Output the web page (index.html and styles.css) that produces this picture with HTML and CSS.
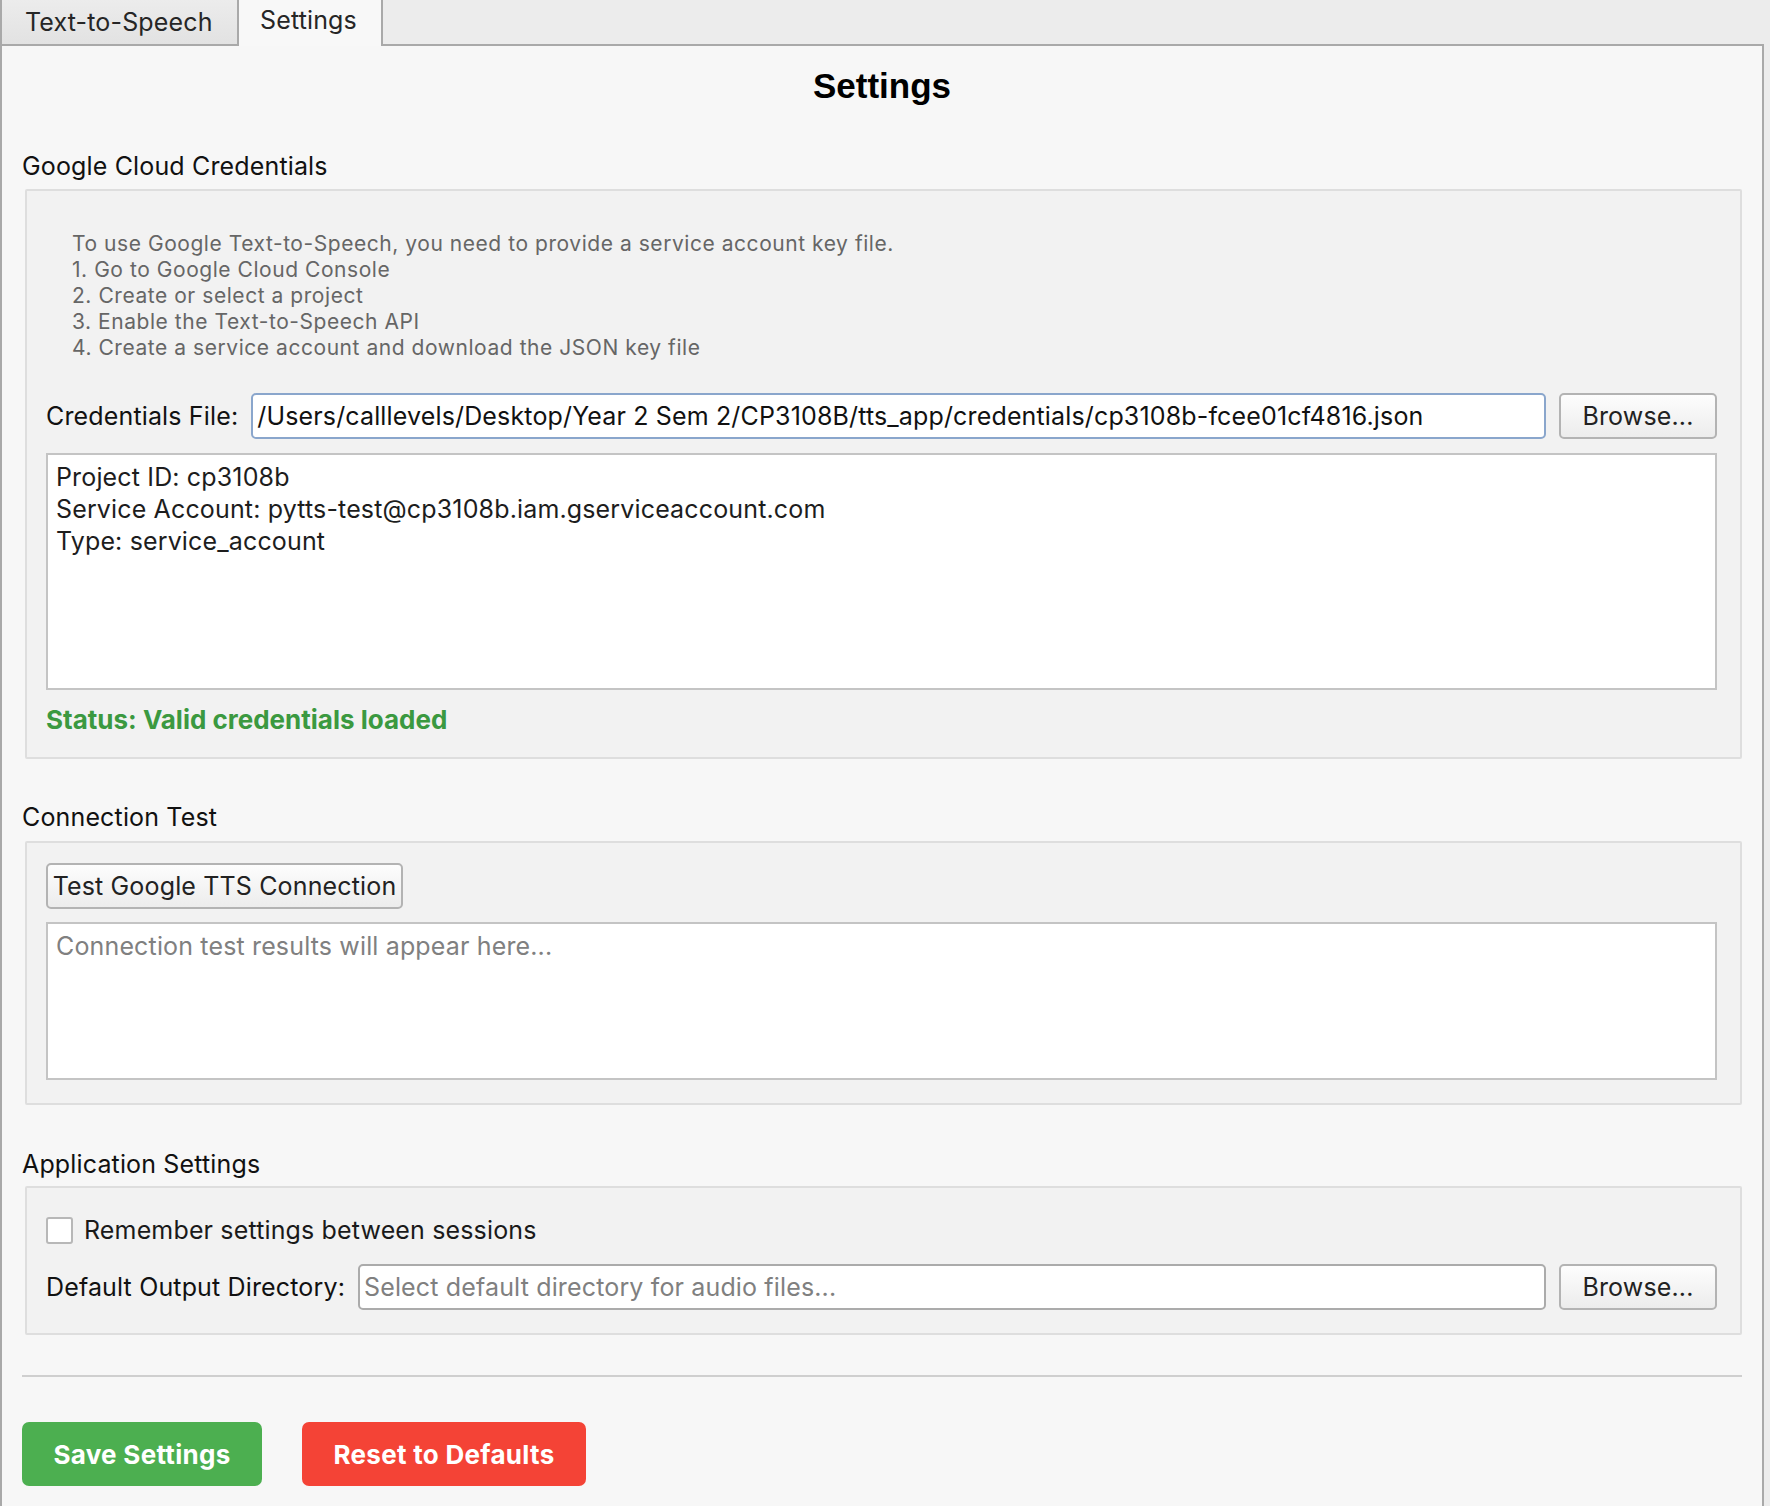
FILE: index.html
```html
<!DOCTYPE html>
<html>
<head>
<meta charset="utf-8">
<link rel="stylesheet" href="styles.css">
</head>
<body>
<div class="window">
  <div class="tabbar">
    <div class="tab">Text-to-Speech</div>
    <div class="tab tab-active">Settings</div>
    <div class="tab-fill"></div>
  </div>
  <div class="pane">
    <div class="title">Settings</div>

    <div class="section-label">Google Cloud Credentials</div>
    <div class="group group-creds">
      <div class="info">
        <div>To use Google Text-to-Speech, you need to provide a service account key file.</div>
        <div>1. Go to Google Cloud Console</div>
        <div>2. Create or select a project</div>
        <div>3. Enable the Text-to-Speech API</div>
        <div>4. Create a service account and download the JSON key file</div>
      </div>
      <div class="row row-file">
        <span class="label">Credentials File:</span>
        <div class="input input-focus">/Users/calllevels/Desktop/Year 2 Sem 2/CP3108B/tts_app/credentials/cp3108b-fcee01cf4816.json</div>
        <div class="btn">Browse...</div>
      </div>
      <div class="textbox textbox-creds">
        <div>Project ID: cp3108b</div>
        <div>Service Account: pytts-test@cp3108b.iam.gserviceaccount.com</div>
        <div>Type: service_account</div>
      </div>
      <div class="status">Status: Valid credentials loaded</div>
    </div>

    <div class="section-label section-conn">Connection Test</div>
    <div class="group group-conn">
      <div class="btn btn-test">Test Google TTS Connection</div>
      <div class="textbox textbox-conn">
        <div class="placeholder">Connection test results will appear here...</div>
      </div>
    </div>

    <div class="section-label section-app">Application Settings</div>
    <div class="group group-app">
      <div class="check-row">
        <span class="checkbox"></span>
        <span class="check-label">Remember settings between sessions</span>
      </div>
      <div class="row row-dir">
        <span class="label">Default Output Directory:</span>
        <div class="input"><span class="placeholder">Select default directory for audio files...</span></div>
        <div class="btn">Browse...</div>
      </div>
    </div>

    <div class="separator"></div>

    <div class="actions">
      <div class="action action-save">Save Settings</div>
      <div class="action action-reset">Reset to Defaults</div>
    </div>
  </div>
</div>
</body>
</html>
```

FILE: styles.css
```css
* { box-sizing: border-box; }

html, body {
  margin: 0;
  padding: 0;
  background: #ececec;
  height: 100%;
  overflow: hidden;
}

body {
  font-family: Inter, "Noto Sans", "Liberation Sans", sans-serif;
  font-size: 25px;
  letter-spacing: 0.15px;
  color: #1d1d1d;
}

.window {
  width: 1764px;
}

.tabbar {
  display: flex;
  height: 46px;
}

.tab {
  height: 46px;
  padding: 0 23px;
  display: flex;
  align-items: center;
  font-size: 25px;
  color: #262626;
  background: linear-gradient(#ececec, #e2e2e2);
  border-left: 2px solid #a9a9a9;
  border-bottom: 2px solid #a9a9a9;
  width: 237px;
  padding-bottom: 0;
}

.tab-active {
  width: 146px;
  background: #f8f8f8;
  border-bottom: none;
  border-left: 2px solid #a9a9a9;
  border-right: 2px solid #a9a9a9;
  padding: 0 0 0 21px;
  padding-bottom: 6px;
}

.tab-fill {
  flex: 1;
  border-bottom: 2px solid #a9a9a9;
  border-right: 2px solid #a9a9a9;
  margin-top: 44px;
  height: 2px;
}

.pane {
  background: #f7f7f7;
  border-left: 2px solid #a9a9a9;
  border-right: 2px solid #a9a9a9;
  height: 1460px;
  padding: 0 20px 0 20px;
  display: flex;
  flex-direction: column;
}

.title {
  margin-top: 20px;
  height: 40px;
  line-height: 40px;
  text-align: center;
  font-family: "Liberation Sans", Arial, sans-serif;
  font-weight: bold;
  font-size: 35px;
  letter-spacing: 0;
  color: #000;
}

.section-label {
  height: 32px;
  line-height: 32px;
  margin-top: 44px;
  color: #111;
}

.section-conn { margin-top: 42px; }
.section-app { margin-top: 43px; }

.group {
  margin-left: 3px;
  background: #f2f2f2;
  border: 2px solid #dedede;
  border-radius: 2px;
  padding: 0 23px 0 19px;
  display: flex;
  flex-direction: column;
}

.group-creds {
  margin-top: 7px;
  height: 570px;
  padding-top: 40px;
}

.info {
  padding-left: 26px;
  font-size: 21px;
  letter-spacing: 0.55px;
  line-height: 26px;
  color: #666;
}

.row {
  display: flex;
  align-items: center;
  height: 46px;
}

.row-file { margin-top: 32px; }

.label {
  color: #111;
  margin-right: 13px;
  white-space: nowrap;
}

.input {
  flex: 1;
  height: 46px;
  background: #fff;
  border: 2px solid #ababab;
  border-radius: 5px;
  padding: 0 4px;
  display: flex;
  align-items: center;
  white-space: nowrap;
  overflow: hidden;
  color: #111;
}

.input-focus {
  border-color: #8aa6cc;
}

.btn {
  height: 46px;
  background: linear-gradient(#fdfdfd, #ececec);
  border: 2px solid #b3b3b3;
  border-radius: 5px;
  display: flex;
  align-items: center;
  justify-content: center;
  color: #222;
  white-space: nowrap;
}

.row .btn {
  width: 158px;
  margin-left: 13px;
}

.textbox {
  background: #fff;
  border: 2px solid #c4c4c4;
  padding: 6px 8px;
  line-height: 32px;
}

.textbox-creds {
  margin-top: 14px;
  height: 237px;
}

.status {
  margin-top: 14px;
  height: 32px;
  line-height: 32px;
  font-weight: 700;
  font-size: 26px;
  letter-spacing: 0;
  color: #3b9940;
}

.group-conn {
  margin-top: 8px;
  height: 264px;
  padding-top: 20px;
}

.btn-test {
  align-self: flex-start;
  width: 357px;
  height: 46px;
}

.textbox-conn {
  margin-top: 13px;
  height: 158px;
}

.placeholder {
  color: #808080;
}

.group-app {
  margin-top: 6px;
  height: 149px;
  padding-top: 26px;
}

.check-row {
  display: flex;
  align-items: center;
  height: 32px;
}

.checkbox {
  width: 27px;
  height: 27px;
  background: #fff;
  border: 2px solid #b8b8b8;
  border-radius: 3px;
  margin-right: 11px;
}

.check-label { color: #1a1a1a; }

.row-dir { margin-top: 18px; }

.separator {
  margin-top: 40px;
  margin-left: 0;
  height: 2px;
  background: #cfcfcf;
}

.actions {
  margin-top: 45px;
  display: flex;
  gap: 40px;
}

.action {
  height: 64px;
  border-radius: 7px;
  display: flex;
  align-items: center;
  justify-content: center;
  color: #fff;
  font-weight: 700;
  font-size: 26px;
  letter-spacing: 0.3px;
}

.action-save {
  width: 240px;
  background: #4caf50;
}

.action-reset {
  width: 284px;
  background: #f44336;
}
```
